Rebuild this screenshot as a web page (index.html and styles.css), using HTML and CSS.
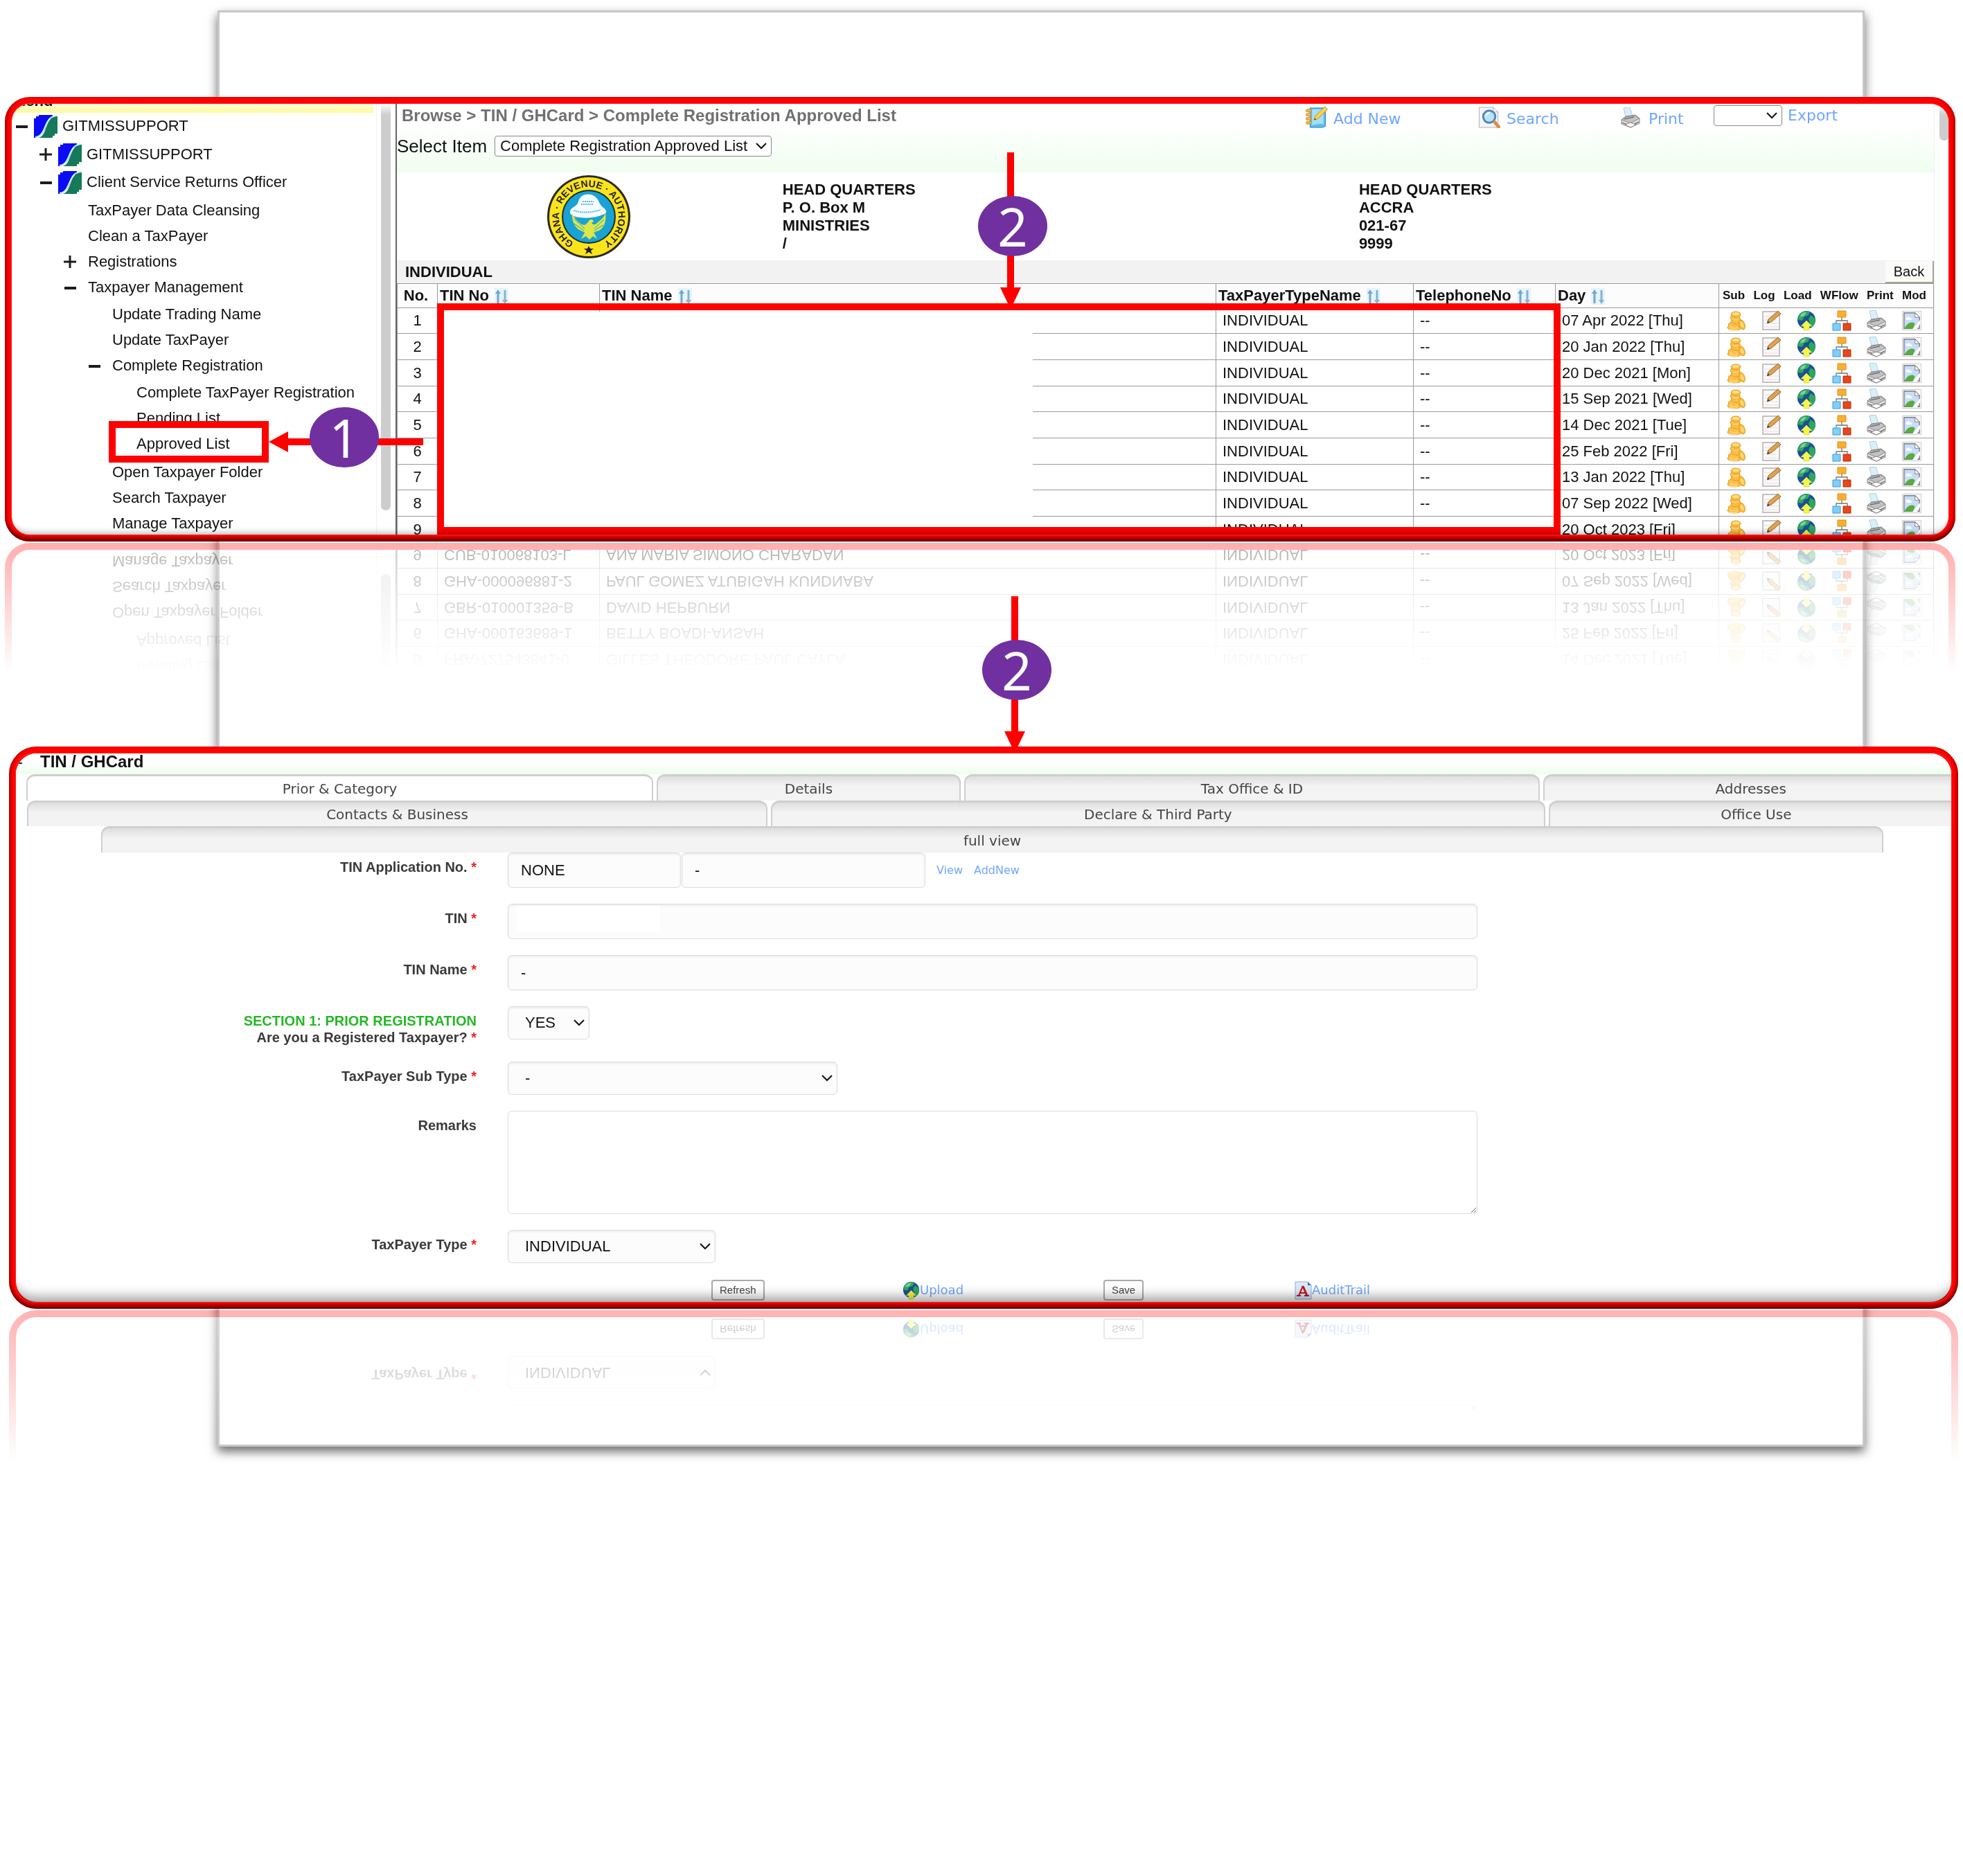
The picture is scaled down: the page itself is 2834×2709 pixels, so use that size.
FILE: index.html
```html
<!DOCTYPE html>
<html lang="en">
<head>
<meta charset="utf-8">
<title>TIN / GHCard - Complete Registration</title>
<link rel="stylesheet" href="styles.css">
</head>
<body>
<svg class="sprite" aria-hidden="true">
  <symbol id="i-org" viewBox="0 0 34 33"><path fill="#0b0bf5" d="M7 0h20v6H22C16 14 18 28 3 33H0V5h3V2h4z"/><path fill="#15795a" d="M34 2v25h-4v3h-3v3H7c13-4 8-27 24-31z"/><path fill="none" stroke="#c8f2f5" stroke-width="2" d="M2 32C19 31 13 2 33 1"/></symbol>
  <symbol id="i-sort" viewBox="0 0 20 24"><path fill="#e6f3fb" d="M0 0h20v24H0z"/><path fill="#6fa9c9" d="M5 2l4 6H6.500v14h-3V8H1z"/><path fill="#82b4d0" d="M15 23l-4-6h2.500V3h3v14H19z"/></symbol>
  <symbol id="i-coins" viewBox="0 0 28 30"><g fill="#fdbf45" stroke="#e09a24" stroke-width="1"><ellipse cx="11" cy="25" rx="10" ry="4"/><ellipse cx="11" cy="21" rx="9" ry="4"/><ellipse cx="14" cy="16" rx="8" ry="4"/><ellipse cx="12" cy="11" rx="7" ry="4"/><ellipse cx="13" cy="6" rx="7" ry="4"/><ellipse cx="22" cy="21" rx="4" ry="7" transform="rotate(-20 22 21)"/></g><ellipse cx="13" cy="5" rx="5" ry="2" fill="#ffe08a"/><ellipse cx="22" cy="21" rx="2" ry="4" fill="#ffda78" transform="rotate(-20 22 21)"/><path fill="none" stroke="#ffe08a" stroke-width="1.500" d="M4 23c3 3 9 3 12 1M4 27c4 2 9 2 12 0M8 13c3 2 7 1 9 0"/></symbol>
  <symbol id="i-log" viewBox="0 0 28 30"><path fill="#fbfafa" stroke="#b5adb0" stroke-width="1.500" d="M1 2h20l4 4v22H1z"/><path stroke="#ead9dd" d="M3 9h18M3 14h18M3 19h20M3 24h20"/><path fill="#e2a24a" stroke="#8a6432" stroke-width="1" d="M8 18l1-5L23 1l4 4-14 12z"/><path fill="#333" d="M7 19l1-4 3 3z"/></symbol>
  <symbol id="i-load" viewBox="0 0 28 30"><circle cx="14" cy="14" r="13" fill="#1b4f96"/><path fill="#2da85a" d="M5 5c5-5 12-4 14-2l-3 5-5 1-3 6-6-1C1 10 3 7 5 5zM20 7l6 4c2 7-1 11-4 13l-3-5-2-6z"/><path fill="#9fe0c0" opacity=".7" d="M6 6c3-3 6-3 8-3l-3 5-6 2z"/><path fill="#f4f64a" stroke="#d8dc50" stroke-width=".8" d="M14 15l8 8h-4v6h-8v-6H6z"/></symbol>
  <symbol id="i-flow" viewBox="0 0 28 30"><path fill="none" stroke="#6b7a80" stroke-width="1.300" d="M14 10v5M6 19v-4h16v4"/><path fill="#fbb02d" stroke="#dc8c1c" d="M8 1h12v9H8z"/><path fill="#7fd0fa" stroke="#3a9ad4" d="M1 19h11v10H1z"/><path fill="#e8461b" stroke="#b52e0c" d="M16 19h11v10H16z"/></symbol>
  <symbol id="i-print" viewBox="0 0 28 30"><path fill="#d9f0fb" stroke="#9dc4d8" stroke-width=".8" d="M4 1l9-1 4 12-10 2z"/><path fill="#e4e4e4" stroke="#858585" d="M1 18l6-5 14-2 6 5v7l-13 6-13-5z"/><path fill="#c2c2c2" stroke="#777" stroke-width=".8" d="M1 18l13 5 13-7-6-4-14 2z"/><path fill="none" stroke="#555" stroke-width="1.200" d="M5 17l14-3M2 22l12 5 12-6"/><path fill="#fff" stroke="#666" stroke-width=".8" d="M6 25l8 4 8-4-8-3z"/></symbol>
  <symbol id="i-broken" viewBox="0 0 30 30"><path fill="#fff" stroke="#c4c4c4" d="M.5.500h29v29H.5z"/><path fill="#c9dcfa" stroke="#7c7c7c" stroke-width="1.500" d="M3 3h17l7 7v17H3z"/><path fill="#fff" stroke="#7c7c7c" d="M20 3v7h7z"/><path fill="#fff" d="M6 12c0-3 6-4 7-1 3 0 3 3 1 3H7z"/><path fill="#57ad3b" d="M4 27c3-8 12-12 16-7l-3 7z"/><path fill="#fff" d="M16 28L28 14v6l-5 8z"/></symbol>
  <symbol id="i-add" viewBox="0 0 33 33"><path fill="#5ebdf0" stroke="#2b7fb5" d="M7 3h23v27l-4 2H7z"/><path fill="#a5e0fa" d="M10 5h17v22c-6-1-12 0-17 2z"/><g fill="#f4b53a" stroke="#b97c1d" stroke-width=".7"><rect x="1" y="5" width="8" height="4" rx="2"/><rect x="1" y="11" width="8" height="4" rx="2"/><rect x="1" y="17" width="8" height="4" rx="2"/><rect x="1" y="23" width="8" height="4" rx="2"/></g><path fill="#fbd24a" stroke="#c58a1c" d="M13 21l2-6L29 1l4 4-14 14z"/><path fill="#444" d="M13 21l1-3 2 2z"/></symbol>
  <symbol id="i-search" viewBox="0 0 33 33"><path fill="#f5f5f7" stroke="#b5adb2" d="M1 2h21l7 7v23H1z"/><path fill="#fff" stroke="#b5adb2" d="M22 2v7h7z"/><circle cx="16" cy="16" r="9" fill="#b6e3fa" stroke="#4f86ba" stroke-width="3"/><path stroke="#fff" stroke-width="2" fill="none" d="M11 15c1-3 3-5 6-5"/><path stroke="#d6914a" stroke-width="5" stroke-linecap="round" d="M24 24l6 7"/></symbol>
  <symbol id="i-audit" viewBox="0 0 25 27"><path fill="#dbe9fb" stroke="#8eb0dc" d="M1 1h18l5 5v20H1z"/><path fill="#3f6fb5" d="M19 1l5 5h-5z"/><path fill="none" stroke="#c21818" stroke-width="3" d="M12 7l6 14"/><path fill="none" stroke="#c21818" stroke-width="2" d="M12 7L6 21M8 17h8M3 21h6M14 21h7"/></symbol>
  <symbol id="i-plus" viewBox="0 0 20 20"><path stroke="#1c1c1c" stroke-width="3" d="M1 10h18M10 1v18"/></symbol>
  <symbol id="i-minus" viewBox="0 0 20 20"><path stroke="#1c1c1c" stroke-width="4" d="M2 11h17"/></symbol>
</svg>

<main class="canvas">
  <div class="sheet"></div>

  <section class="frame frame-browse">
    <div class="panel browse">
      <nav class="sidebar">
        <div class="tree-pane">
          <div class="menu-head">Menu</div>
          <ul class="tree">
            <li><a class="node node-root" href="#"><svg class="toggle"><use href="#i-minus"/></svg><svg class="org"><use href="#i-org"/></svg>GITMISSUPPORT</a>
              <ul class="branch">
                <li><a class="node node-org" href="#"><svg class="toggle"><use href="#i-plus"/></svg><svg class="org"><use href="#i-org"/></svg>GITMISSUPPORT</a></li>
                <li><a class="node node-org" href="#"><svg class="toggle"><use href="#i-minus"/></svg><svg class="org"><use href="#i-org"/></svg>Client Service Returns Officer</a>
                  <ul class="branch">
                    <li><a class="node leaf" href="#">TaxPayer Data Cleansing</a></li>
                    <li><a class="node leaf" href="#">Clean a TaxPayer</a></li>
                    <li><a class="node" href="#"><svg class="toggle"><use href="#i-plus"/></svg>Registrations</a></li>
                    <li><a class="node" href="#"><svg class="toggle"><use href="#i-minus"/></svg>Taxpayer Management</a>
                      <ul class="branch">
                        <li><a class="node leaf" href="#">Update Trading Name</a></li>
                        <li><a class="node leaf" href="#">Update TaxPayer</a></li>
                        <li><a class="node" href="#"><svg class="toggle"><use href="#i-minus"/></svg>Complete Registration</a>
                          <ul class="branch branch-end">
                            <li><a class="node leaf" href="#">Complete TaxPayer Registration</a></li>
                            <li><a class="node leaf" href="#">Pending List</a></li>
                            <li><a class="node leaf" href="#">Approved List</a></li>
                          </ul>
                        </li>
                        <li><a class="node leaf" href="#">Open Taxpayer Folder</a></li>
                        <li><a class="node leaf" href="#">Search Taxpayer</a></li>
                        <li><a class="node leaf" href="#">Manage Taxpayer</a></li>
                      </ul>
                    </li>
                  </ul>
                </li>
              </ul>
            </li>
          </ul>
        </div>
        <div class="gutter"><div class="thumb thumb-tree"></div></div>
      </nav>

      <div class="content">
        <header class="content-head">
          <div class="head-left">
            <div class="crumbs">Browse &gt; TIN / GHCard &gt; Complete Registration Approved List</div>
            <div class="select-row">
              <label for="item">Select Item</label>
              <select id="item" class="plain-select item-select"><option>Complete Registration Approved List</option></select>
            </div>
          </div>
          <div class="toolbar">
            <a class="tool" href="#"><svg class="tool-icon"><use href="#i-add"/></svg>Add New</a>
            <a class="tool" href="#"><svg class="tool-icon"><use href="#i-search"/></svg>Search</a>
            <a class="tool tool-print" href="#"><svg class="print-icon"><use href="#i-print"/></svg>Print</a>
            <div class="export"><select class="plain-select export-select" aria-label="Export format"><option></option></select><a href="#">Export</a></div>
          </div>
        </header>

        <div class="letterhead">
          <svg class="seal" viewBox="0 0 120 120" role="img" aria-label="Ghana Revenue Authority">
            <circle cx="60" cy="60" r="60" fill="#2b2a1c"/><circle cx="60" cy="60" r="57" fill="#fbe41c"/>
            <circle cx="60" cy="60" r="39" fill="#1d2c2f"/><circle cx="60" cy="60" r="37" fill="#19a3d2"/>
            <path id="ring" fill="none" d="M60 103A43 43 0 1 1 60.1 103"/>
            <text class="seal-text"><textPath href="#ring" startOffset="50%" text-anchor="middle">GHANA · REVENUE · AUTHORITY</textPath></text>
            <path fill="#f4fcff" d="M33 52c1-6 10-6 12-14 2-9 12-13 21-9 9 4 8 12 14 17 7 5 7 9 0 11-12 6-35 6-44 1-3-2-3-4-3-6z"/>
            <path fill="none" stroke="#5fb8d8" stroke-width="2" stroke-dasharray="2 1" d="M38 51c12 4 27 3 39-1M51 38h16M49 42h18"/>
            <path fill="#dfe64a" d="M60 66c3-4 7-1 7 1l-3 2c2 3 5 3 8 0 6-5 11-9 12-15 2 13-2 24-13 28l-3 2 4 8-6-4-5 5-5-5-7 4 5-9c-13-4-19-15-18-29 2 7 8 13 14 17 4 2 7 0 10-5z"/>
            <path fill="none" stroke="#19a3d2" stroke-width="1" d="M39 63l15 14M39 70l14 10M43 78l11 5M82 64L68 77M81 72l-13 8M76 80l-9 3"/>
            <path fill="#1f1f1f" d="M60 102l2 4h5l-4 3 2 5-5-3-5 3 2-5-4-3h5z"/>
          </svg>
          <address>HEAD QUARTERS<br>P. O. Box M<br>MINISTRIES<br>/</address>
          <address>HEAD QUARTERS<br>ACCRA<br>021-67<br>9999</address>
        </div>

        <div class="group-bar"><span>INDIVIDUAL</span><button class="back" type="button">Back</button></div>

        <table class="grid">
          <colgroup><col class="c-no"><col class="c-tin"><col><col class="c-type"><col class="c-tel"><col class="c-day"><col class="c-act"></colgroup>
          <thead>
            <tr><th class="num">No.</th><th>TIN No <svg class="sort"><use href="#i-sort"/></svg></th><th>TIN Name <svg class="sort"><use href="#i-sort"/></svg></th><th>TaxPayerTypeName <svg class="sort"><use href="#i-sort"/></svg></th><th>TelephoneNo <svg class="sort"><use href="#i-sort"/></svg></th><th>Day <svg class="sort"><use href="#i-sort"/></svg></th><th class="act-head"><div class="act-labels"><span>Sub</span><span>Log</span><span>Load</span><span>WFlow</span><span>Print</span><span>Mod</span></div></th></tr>
          </thead>
          <tbody>
            <tr><td class="num">1</td><td></td><td></td><td>INDIVIDUAL</td><td>--</td><td>07 Apr 2022 [Thu]</td><td><div class="acts"><svg><use href="#i-coins"/></svg><svg><use href="#i-log"/></svg><svg><use href="#i-load"/></svg><svg><use href="#i-flow"/></svg><svg><use href="#i-print"/></svg><svg><use href="#i-broken"/></svg></div></td></tr>
            <tr><td class="num">2</td><td></td><td></td><td>INDIVIDUAL</td><td>--</td><td>20 Jan 2022 [Thu]</td><td><div class="acts"><svg><use href="#i-coins"/></svg><svg><use href="#i-log"/></svg><svg><use href="#i-load"/></svg><svg><use href="#i-flow"/></svg><svg><use href="#i-print"/></svg><svg><use href="#i-broken"/></svg></div></td></tr>
            <tr><td class="num">3</td><td></td><td></td><td>INDIVIDUAL</td><td>--</td><td>20 Dec 2021 [Mon]</td><td><div class="acts"><svg><use href="#i-coins"/></svg><svg><use href="#i-log"/></svg><svg><use href="#i-load"/></svg><svg><use href="#i-flow"/></svg><svg><use href="#i-print"/></svg><svg><use href="#i-broken"/></svg></div></td></tr>
            <tr><td class="num">4</td><td></td><td></td><td>INDIVIDUAL</td><td>--</td><td>15 Sep 2021 [Wed]</td><td><div class="acts"><svg><use href="#i-coins"/></svg><svg><use href="#i-log"/></svg><svg><use href="#i-load"/></svg><svg><use href="#i-flow"/></svg><svg><use href="#i-print"/></svg><svg><use href="#i-broken"/></svg></div></td></tr>
            <tr><td class="num">5</td><td>FRA-727543841-0</td><td>GILLES THEODORE PAUL CAYLA</td><td>INDIVIDUAL</td><td>--</td><td>14 Dec 2021 [Tue]</td><td><div class="acts"><svg><use href="#i-coins"/></svg><svg><use href="#i-log"/></svg><svg><use href="#i-load"/></svg><svg><use href="#i-flow"/></svg><svg><use href="#i-print"/></svg><svg><use href="#i-broken"/></svg></div></td></tr>
            <tr><td class="num">6</td><td>GHA-000163689-1</td><td>BETTY BOADI-ANSAH</td><td>INDIVIDUAL</td><td>--</td><td>25 Feb 2022 [Fri]</td><td><div class="acts"><svg><use href="#i-coins"/></svg><svg><use href="#i-log"/></svg><svg><use href="#i-load"/></svg><svg><use href="#i-flow"/></svg><svg><use href="#i-print"/></svg><svg><use href="#i-broken"/></svg></div></td></tr>
            <tr><td class="num">7</td><td>GBR-010001359-B</td><td>DAVID HEPBURN</td><td>INDIVIDUAL</td><td>--</td><td>13 Jan 2022 [Thu]</td><td><div class="acts"><svg><use href="#i-coins"/></svg><svg><use href="#i-log"/></svg><svg><use href="#i-load"/></svg><svg><use href="#i-flow"/></svg><svg><use href="#i-print"/></svg><svg><use href="#i-broken"/></svg></div></td></tr>
            <tr><td class="num">8</td><td>GHA-000096881-2</td><td>PAUL GOMEZ ATUBIGAH KUNDNABA</td><td>INDIVIDUAL</td><td>--</td><td>07 Sep 2022 [Wed]</td><td><div class="acts"><svg><use href="#i-coins"/></svg><svg><use href="#i-log"/></svg><svg><use href="#i-load"/></svg><svg><use href="#i-flow"/></svg><svg><use href="#i-print"/></svg><svg><use href="#i-broken"/></svg></div></td></tr>
            <tr><td class="num">9</td><td>CUB-010068103-L</td><td>ANA MARIA SIMONO CHARADAN</td><td>INDIVIDUAL</td><td>--</td><td>20 Oct 2023 [Fri]</td><td><div class="acts"><svg><use href="#i-coins"/></svg><svg><use href="#i-log"/></svg><svg><use href="#i-load"/></svg><svg><use href="#i-flow"/></svg><svg><use href="#i-print"/></svg><svg><use href="#i-broken"/></svg></div></td></tr>
          </tbody>
        </table>
      </div>
      <div class="gutter gutter-main"><div class="thumb thumb-main"></div></div>
    </div>
    <div class="cover"></div>
    <div class="mark mark-rows"></div>
    <div class="bevel"></div>
    <div class="mark mark-item"></div>
    <svg class="arrow arrow-left" viewBox="0 0 223 30"><path fill="#f00" d="M0 15L28 0v10h195v10H28v10z"/></svg>
    <div class="step step-one">1</div>
    <svg class="arrow arrow-rows" viewBox="0 0 30 218"><path fill="#f00" d="M11 218L0 195h10V0h10v195h10l-11 23z"/></svg>
    <div class="step step-two">2</div>
  </section>

  <section class="frame frame-form">
    <form class="panel record">
      <h1 class="record-title"><span class="dash">-</span>TIN / GHCard</h1>
      <div class="tabs tabs-one">
        <button type="button" class="tab tab-on w906">Prior &amp; Category</button>
        <button type="button" class="tab w437">Details</button>
        <button type="button" class="tab w832">Tax Office &amp; ID</button>
        <button type="button" class="tab w598">Addresses</button>
      </div>
      <div class="tabs tabs-two">
        <button type="button" class="tab w1070">Contacts &amp; Business</button>
        <button type="button" class="tab w1119">Declare &amp; Third Party</button>
        <button type="button" class="tab w598">Office Use</button>
      </div>
      <div class="tabs tabs-three">
        <button type="button" class="tab w1070">full view</button>
      </div>

      <div class="fields">
        <label for="app">TIN Application No. <i>*</i></label>
        <div class="pair"><input id="app" class="box app-no" value="NONE"><input class="box app-name" value="-" aria-label="Application name"><a href="#">View</a><a href="#">AddNew</a></div>
        <label for="tin">TIN <i>*</i></label>
        <div class="tin-wrap"><input id="tin" class="box wide" value=""><span class="tin-cover"></span></div>
        <label for="name">TIN Name <i>*</i></label>
        <input id="name" class="box wide" value="-">
        <label for="reg"><b>SECTION 1: PRIOR REGISTRATION</b><br>Are you a Registered Taxpayer? <i>*</i></label>
        <select id="reg" class="box pick pick-s"><option>YES</option></select>
        <label for="sub">TaxPayer Sub Type <i>*</i></label>
        <select id="sub" class="box pick pick-l"><option>-</option></select>
        <label for="rem">Remarks</label>
        <textarea id="rem" class="box wide remarks"></textarea>
        <label for="type">TaxPayer Type <i>*</i></label>
        <select id="type" class="box pick pick-m"><option>INDIVIDUAL</option></select>
      </div>

      <div class="actions">
        <div><button class="small-btn" type="button">Refresh</button></div>
        <a href="#"><svg><use href="#i-load"/></svg>Upload</a>
        <div><button class="small-btn" type="button">Save</button></div>
        <a href="#"><svg><use href="#i-audit"/></svg>AuditTrail</a>
      </div>
    </form>
    <div class="bevel bevel-deep"></div>

    <svg class="arrow arrow-form" viewBox="0 0 30 218"><path fill="#f00" d="M11 218L0 195h10V0h10v195h10l-11 23z"/></svg>
    <div class="step step-three">2</div>
  </section>
</main>
</body>
</html>
```

FILE: styles.css
```css
* { box-sizing: border-box; }
body {
  margin: 0;
  background: #fff;
  color: #111;
  font: 22px/26px "Liberation Sans", Arial, sans-serif;
}
a { color: #6fa6ff; text-decoration: none; }
select, input, textarea, button { font: inherit; color: inherit; margin: 0; }
svg { flex: none; }
.sprite { position: absolute; width: 0; height: 0; }

/* Canvas and backdrop sheet */
.canvas { position: relative; padding: 140px 7px 240px; overflow: hidden; }
.sheet {
  position: absolute;
  inset: 15px 142px 41px 314px;
  border: 3px solid #c8c8c8;
  box-shadow: 0 7px 14px rgba(0, 0, 0, .6);
}
.frame { position: relative; }
.frame-browse { margin-right: 4px; }
.frame-form { margin: 296px 0 0 6px; }
.panel {
  border: 10px solid #f00;
  border-radius: 36px;
  background: #fff;
  overflow: hidden;
  -webkit-box-reflect: below 2px linear-gradient(transparent 71%, rgba(0, 0, 0, .32));
}
.bevel {
  position: absolute;
  inset: 0;
  border-radius: 36px;
  pointer-events: none;
  box-shadow: inset 0 -8px 6px -3px rgba(80, 0, 0, .85), inset 4px 0 4px -2px rgba(110, 0, 0, .6), inset -4px 0 4px -2px rgba(110, 0, 0, .6);
}
.bevel::after {
  content: "";
  position: absolute;
  inset: 10px;
  border-radius: 26px;
  box-shadow: inset 0 -12px 10px -10px rgba(0, 0, 0, .3), 0 0 3px rgba(255, 110, 110, .7);
}
.bevel-deep::after { box-shadow: inset 0 -22px 16px -14px rgba(0, 0, 0, .35), 0 0 3px rgba(255, 110, 110, .7); }

/* Browse panel */
.browse { display: flex; height: 642px; }
.sidebar { display: flex; flex: none; width: 556px; border-right: 2px solid #666; }
.tree-pane { flex: 1; margin-right: 4px; }
.menu-head {
  display: flex;
  align-items: flex-end;
  height: 13px;
  padding: 0 0 4px 2px;
  background: linear-gradient(#ffffd8, #fffb9c);
  font-weight: bold;
}
.tree, .branch { list-style: none; margin: 0; padding: 0; }
.tree { padding-left: 4px; }
.branch { padding: 2px 0 0 35px; }
.branch-end { padding-bottom: 4px; }
.node { display: flex; align-items: center; height: 37px; color: #111; white-space: nowrap; }
.node-root { height: 38px; }
.node-org { height: 40px; }
.leaf { padding-left: 36px; }
.toggle { width: 20px; height: 20px; margin-right: 16px; }
.org { width: 34px; height: 33px; margin-right: 7px; }
.node-root .toggle, .node-org .toggle { margin-right: 8px; }
.gutter { flex: none; width: 28px; padding-left: 6px; border-left: 1px solid #f0f0f0; }
.gutter-main { width: 21px; padding-left: 7px; }
.thumb { width: 14px; border-radius: 0 0 7px 7px; background: linear-gradient(#fff, #cdcdcd 16px); }
.thumb-tree { height: 587px; }
.thumb-main { height: 53px; }

.content { flex: 1; min-width: 0; }
.content-head {
  display: flex;
  justify-content: space-between;
  height: 99px;
  padding-top: 2px;
  background: linear-gradient(#fff 30%, #effeef);
}
.crumbs { padding-left: 7px; font-size: 24px; line-height: 30px; font-weight: bold; color: #707070; }
.select-row { display: flex; align-items: center; gap: 11px; margin-top: 14px; font-size: 26px; line-height: 29px; }
.plain-select, .pick {
  appearance: none;
  background: #fff url("data:image/svg+xml,%3Csvg xmlns='http://www.w3.org/2000/svg' viewBox='0 0 16 10'%3E%3Cpath fill='none' stroke='%23111' stroke-width='2' d='M1 1l7 7 7-7'/%3E%3C/svg%3E") no-repeat right 6px center / 16px 10px;
}
.plain-select { height: 30px; padding: 0 7px; border: 1px solid #8a8a8a; border-radius: 4px; font-size: 22px; line-height: 26px; }
.item-select { width: 400px; }
.export-select { width: 99px; }
.toolbar { display: grid; grid-template-columns: 250px 206px 134px 318px; align-items: start; font-family: "DejaVu Sans", Verdana, sans-serif; }
.tool { display: flex; align-items: flex-end; gap: 8px; height: 33px; }
.tool-icon { width: 33px; height: 32px; }
.tool-print { gap: 12px; }
.print-icon { width: 28px; height: 30px; }
.export { display: flex; align-items: center; gap: 8px; }

.letterhead { display: grid; grid-template-columns: 2fr 3fr 3fr; height: 127px; align-items: center; }
.seal { width: 120px; height: 120px; justify-self: center; }
.seal-text { font: bold 14px "Liberation Sans", Arial, sans-serif; fill: #222; }
.letterhead address { padding-left: 2px; font-style: normal; font-weight: bold; }
.group-bar { display: flex; justify-content: space-between; align-items: center; height: 33px; padding-left: 12px; background: #f2f2f2; font-weight: bold; }
.back { width: 70px; height: 32px; padding: 0; border: 0; border-right: 2px solid #a3a395; border-bottom: 2px solid #a3a395; background: #fbfbf8; font-size: 20px; font-weight: normal; }

.grid { width: 100%; table-layout: fixed; border-collapse: collapse; }
.c-no { width: 58px; }
.c-tin { width: 234px; }
.c-type { width: 285px; }
.c-tel { width: 205px; }
.c-day { width: 236px; }
.c-act { width: 310px; }
.grid th, .grid td { border: 1px solid #9a9a9a; text-align: left; white-space: nowrap; }
.grid th { height: 35px; padding: 0 0 0 3px; background: #fcfcfc; }
.grid td { height: 38px; padding: 0 0 0 9px; }
.grid tbody tr:nth-child(3n+1) td { height: 37px; }
.grid th.num { padding: 0 4px 0 0; text-align: center; }
.grid td.num { padding: 0; text-align: center; }
.sort { width: 20px; height: 24px; margin-left: 2px; vertical-align: middle; }
.act-labels { display: flex; justify-content: space-between; padding: 0 10px 0 2px; font-size: 17px; }
.acts { display: flex; justify-content: space-between; padding: 0 17px 0 2px; }
.acts svg { width: 28px; height: 30px; }

/* Record form panel */
.bevel-deep, .record { border-radius: 40px; }
.record { -webkit-box-reflect: below 2px linear-gradient(transparent 73%, rgba(0, 0, 0, .3)); }
.record-title { display: flex; height: 30px; margin: 0; padding-left: 2px; font-size: 24px; line-height: 24px; background: linear-gradient(#fff 45%, #ecffec); }
.dash { width: 33px; font-weight: normal; }
.tabs { display: flex; gap: 5px; font-family: "DejaVu Sans", Verdana, sans-serif; }
.tabs-one { margin: 0 -10px 0 15px; }
.tabs-two { margin: 0 -18px 0 16px; }
.tabs-three { margin: 0 98px 0 123px; }
.tab {
  height: 38px;
  padding: 0;
  border: 2px solid #cfcfcf;
  border-width: 3px 2px 0;
  border-radius: 12px 12px 0 0;
  background: linear-gradient(#dedede, #f3f3f3 14px);
  font-size: 20px;
  line-height: 24px;
  color: #444;
}
.tabs-two .tab { height: 37px; }
.tab-on { background: #fff; }
.w906 { flex: 906 0 0; }
.w437 { flex: 437 0 0; }
.w832 { flex: 832 0 0; }
.w598 { flex: 598 0 0; }
.w1070 { flex: 1070 0 0; }
.w1119 { flex: 1119 0 0; }

.fields { display: grid; grid-template-columns: 665px 1400px; column-gap: 45px; row-gap: 23px; align-items: start; }
.fields label { padding-top: 9px; font-size: 20px; line-height: 24px; font-weight: bold; color: #3a3a3a; text-align: right; }
.fields i { font-style: normal; color: #f02020; }
.fields b { color: #25b825; }
.box { height: 51px; padding: 0 18px; border: 1px solid #dcdcdc; border-radius: 6px; background-color: #fcfcfc; box-shadow: inset 0 2px 3px #ececec; color: #111; }
.wide { display: block; width: 100%; }
.pair { display: flex; align-items: center; gap: 1px; font: 16px/20px "DejaVu Sans", Verdana, sans-serif; }
.pair input { font: 22px/26px "Liberation Sans", Arial, sans-serif; }
.pair a { margin-left: 15px; }
.app-no { width: 250px; }
.app-name { width: 352px; }
.tin-wrap { position: relative; }
.tin-cover { position: absolute; left: 13px; top: 3px; width: 207px; height: 38px; background: #fff; }
.pick { height: 48px; padding: 0 24px; background-color: #fcfcfc; }
.pick-s { width: 118px; }
.pick-m { width: 300px; }
.pick-l { width: 476px; }
.remarks { height: 149px; background: #fff; box-shadow: none; resize: vertical; }
.actions { display: grid; grid-template-columns: 276px 290px 276px 200px; align-items: center; height: 56px; padding: 22px 0 0 1004px; font: 18px/24px "DejaVu Sans", Verdana, sans-serif; }
.actions a { display: flex; align-items: center; }
.actions svg { width: 25px; height: 27px; }
.small-btn { display: block; height: 30px; padding: 0 10px; border: 2px solid #aaa; border-radius: 4px; background: #fff; font: 15px/20px "Liberation Sans", Arial, sans-serif; color: #444; }

/* Annotations over the panels */
.cover { position: absolute; left: 634px; top: 310px; width: 850px; height: 312px; background: #fff; }
.mark { position: absolute; border: 10px solid #f00; }
.mark-rows { left: 624px; top: 298px; width: 1622px; height: 335px; border-bottom-width: 12px; }
.mark-item { left: 150px; top: 468px; width: 231px; height: 60px; }
.arrow { position: absolute; }
.arrow-left { left: 381px; top: 483px; width: 223px; height: 30px; }
.arrow-rows { left: 1437px; top: 80px; width: 30px; height: 218px; }
.arrow-form { left: 1437px; top: -217px; width: 30px; height: 218px; }
.step {
  position: absolute;
  width: 100px;
  height: 87px;
  border-radius: 50%;
  background: #7030a0;
  color: #fff;
  font: 76px/87px "Noto Sans", "Open Sans", sans-serif;
  text-align: center;
}
.step-one { left: 440px; top: 448px; }
.step-two { left: 1405px; top: 143px; }
.step-three { left: 1405px; top: -154px; }
```
